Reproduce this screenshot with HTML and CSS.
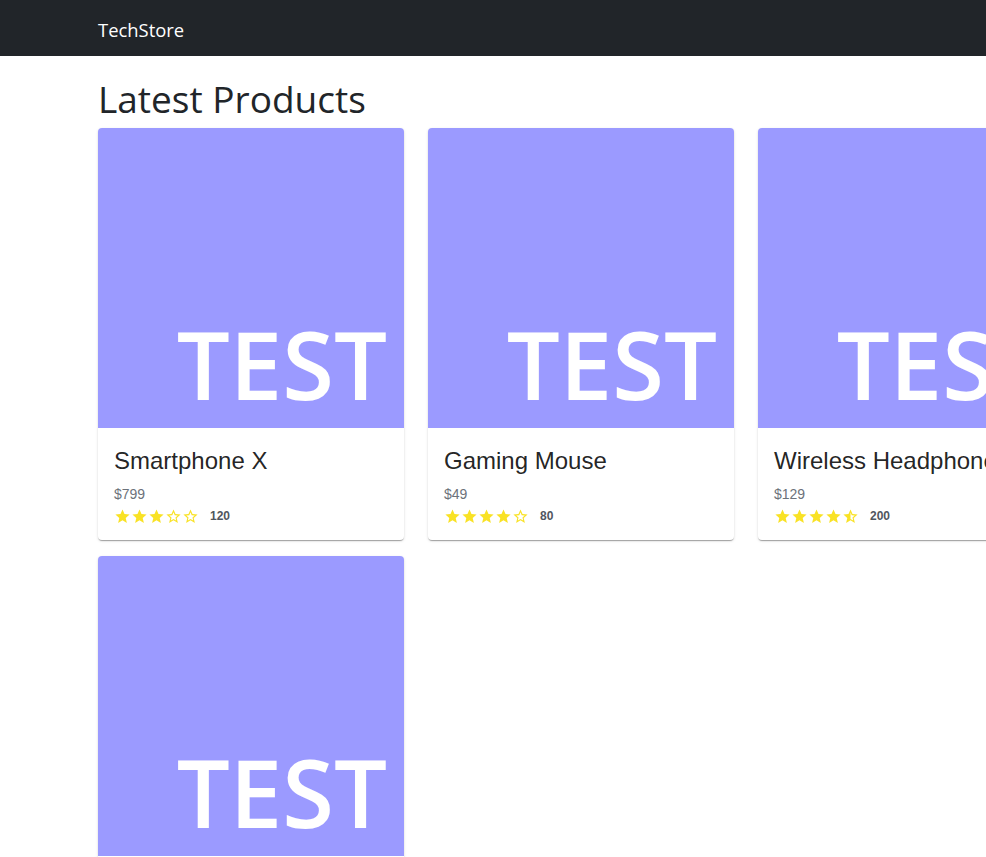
FILE: index.html
```html
<!DOCTYPE html>
<html lang="en">
<head>
<meta charset="utf-8">
<title>TechStore</title>
<link rel="stylesheet" href="styles.css">
</head>
<body>
<svg width="0" height="0" class="defs" aria-hidden="true">
  <defs>
    <path id="star-full" d="M12 17.27L18.18 21l-1.64-7.03L22 9.24l-7.19-.61L12 2 9.19 8.63 2 9.24l5.46 4.73L5.82 21z"/>
    <path id="star-empty" d="M22 9.24l-7.19-.62L12 2 9.19 8.63 2 9.24l5.46 4.73L5.82 21 12 17.27 18.18 21l-1.63-7.03L22 9.24zM12 15.4l-3.76 2.27 1-4.28-3.32-2.88 4.38-.38L12 6.1l1.71 4.04 4.38.38-3.32 2.88 1 4.28L12 15.4z"/>
    <path id="star-half" d="M22 9.24l-7.19-.62L12 2 9.19 8.63 2 9.24l5.46 4.73L5.82 21 12 17.27 18.18 21l-1.63-7.03L22 9.24zM12 15.4V6.1l1.71 4.04 4.38.38-3.32 2.88 1 4.28L12 15.4z"/>
  </defs>
</svg>
<nav class="navbar">
  <div class="container">
    <a class="brand" href="#">TechStore</a>
  </div>
</nav>
<main class="container main">
  <h1 class="page-title">Latest Products</h1>
  <div class="grid">
    <div class="card">
      <div class="card-media"><span class="media-text">TEST</span></div>
      <div class="card-body">
        <h5 class="card-title">Smartphone X</h5>
        <p class="price">$799</p>
        <div class="rating">
          <span class="stars">
            <svg viewBox="0 0 24 24"><use href="#star-full"/></svg>
            <svg viewBox="0 0 24 24"><use href="#star-full"/></svg>
            <svg viewBox="0 0 24 24"><use href="#star-full"/></svg>
            <svg viewBox="0 0 24 24"><use href="#star-empty"/></svg>
            <svg viewBox="0 0 24 24"><use href="#star-empty"/></svg>
          </span>
          <span class="count">120</span>
        </div>
      </div>
    </div>
    <div class="card">
      <div class="card-media"><span class="media-text">TEST</span></div>
      <div class="card-body">
        <h5 class="card-title">Gaming Mouse</h5>
        <p class="price">$49</p>
        <div class="rating">
          <span class="stars">
            <svg viewBox="0 0 24 24"><use href="#star-full"/></svg>
            <svg viewBox="0 0 24 24"><use href="#star-full"/></svg>
            <svg viewBox="0 0 24 24"><use href="#star-full"/></svg>
            <svg viewBox="0 0 24 24"><use href="#star-full"/></svg>
            <svg viewBox="0 0 24 24"><use href="#star-empty"/></svg>
          </span>
          <span class="count">80</span>
        </div>
      </div>
    </div>
    <div class="card">
      <div class="card-media"><span class="media-text">TEST</span></div>
      <div class="card-body">
        <h5 class="card-title">Wireless Headphones</h5>
        <p class="price">$129</p>
        <div class="rating">
          <span class="stars">
            <svg viewBox="0 0 24 24"><use href="#star-full"/></svg>
            <svg viewBox="0 0 24 24"><use href="#star-full"/></svg>
            <svg viewBox="0 0 24 24"><use href="#star-full"/></svg>
            <svg viewBox="0 0 24 24"><use href="#star-full"/></svg>
            <svg viewBox="0 0 24 24"><use href="#star-half"/></svg>
          </span>
          <span class="count">200</span>
        </div>
      </div>
    </div>
    <div class="card">
      <div class="card-media"><span class="media-text">TEST</span></div>
      <div class="card-body">
        <h5 class="card-title">Smart Watch</h5>
        <p class="price">$199</p>
        <div class="rating">
          <span class="stars">
            <svg viewBox="0 0 24 24"><use href="#star-full"/></svg>
            <svg viewBox="0 0 24 24"><use href="#star-full"/></svg>
            <svg viewBox="0 0 24 24"><use href="#star-full"/></svg>
            <svg viewBox="0 0 24 24"><use href="#star-full"/></svg>
            <svg viewBox="0 0 24 24"><use href="#star-empty"/></svg>
          </span>
          <span class="count">150</span>
        </div>
      </div>
    </div>
  </div>
</main>
</body>
</html>
```
FILE: styles.css
```css
html {
  overflow-x: hidden;
}
body {
  margin: 0;
  font-family: "Open Sans", "Noto Sans", sans-serif;
  color: #212529;
  background: #fff;
}
.defs {
  position: absolute;
  width: 0;
  height: 0;
}
.container {
  padding-left: 98px;
  padding-right: 98px;
}
.navbar {
  background: #212529;
  height: 56px;
  display: flex;
  align-items: center;
}
.navbar .container {
  padding-top: 4px;
}
.brand {
  color: #fff;
  text-decoration: none;
  font-size: 18.4px;
  line-height: 1.5;
}
.main {
  padding-top: 19px;
}
.page-title {
  font-size: 37px;
  font-weight: 400;
  line-height: 48px;
  margin: 0 0 5px;
  color: #212529;
}
.grid {
  display: grid;
  grid-template-columns: repeat(3, 306px);
  column-gap: 24px;
  row-gap: 16px;
}
.card {
  background: #fff;
  border-radius: 4px;
  overflow: hidden;
  box-shadow: 0 2px 1px -1px rgba(0,0,0,0.2), 0 1px 1px 0 rgba(0,0,0,0.14), 0 1px 3px 0 rgba(0,0,0,0.12);
}
.card-media {
  height: 300px;
  background: #9b9aff;
  display: flex;
  align-items: flex-end;
  justify-content: flex-end;
  padding: 0 17px 17px 0;
  box-sizing: border-box;
}
.media-text {
  color: #fff;
  font-family: "Open Sans", sans-serif;
  font-weight: 600;
  font-size: 94px;
  line-height: 1;
}
.card-body {
  padding: 17px 16px 14px;
  font-family: "Liberation Sans", Arial, sans-serif;
}
.card-title {
  margin: 0 0 7px;
  font-size: 24px;
  font-weight: 400;
  line-height: 32px;
  color: rgba(0,0,0,0.87);
  white-space: nowrap;
}
.price {
  margin: 0;
  font-size: 14px;
  line-height: 20px;
  color: #6c727a;
}
.rating {
  display: flex;
  align-items: center;
  height: 20px;
  margin-top: 2px;
}
.stars {
  display: inline-flex;
  margin-right: 11px;
}
.stars svg {
  width: 17px;
  height: 17px;
  fill: #f9e225;
  display: block;
}
.count {
  font-size: 12px;
  font-weight: 700;
  color: #50565e;
}
```
